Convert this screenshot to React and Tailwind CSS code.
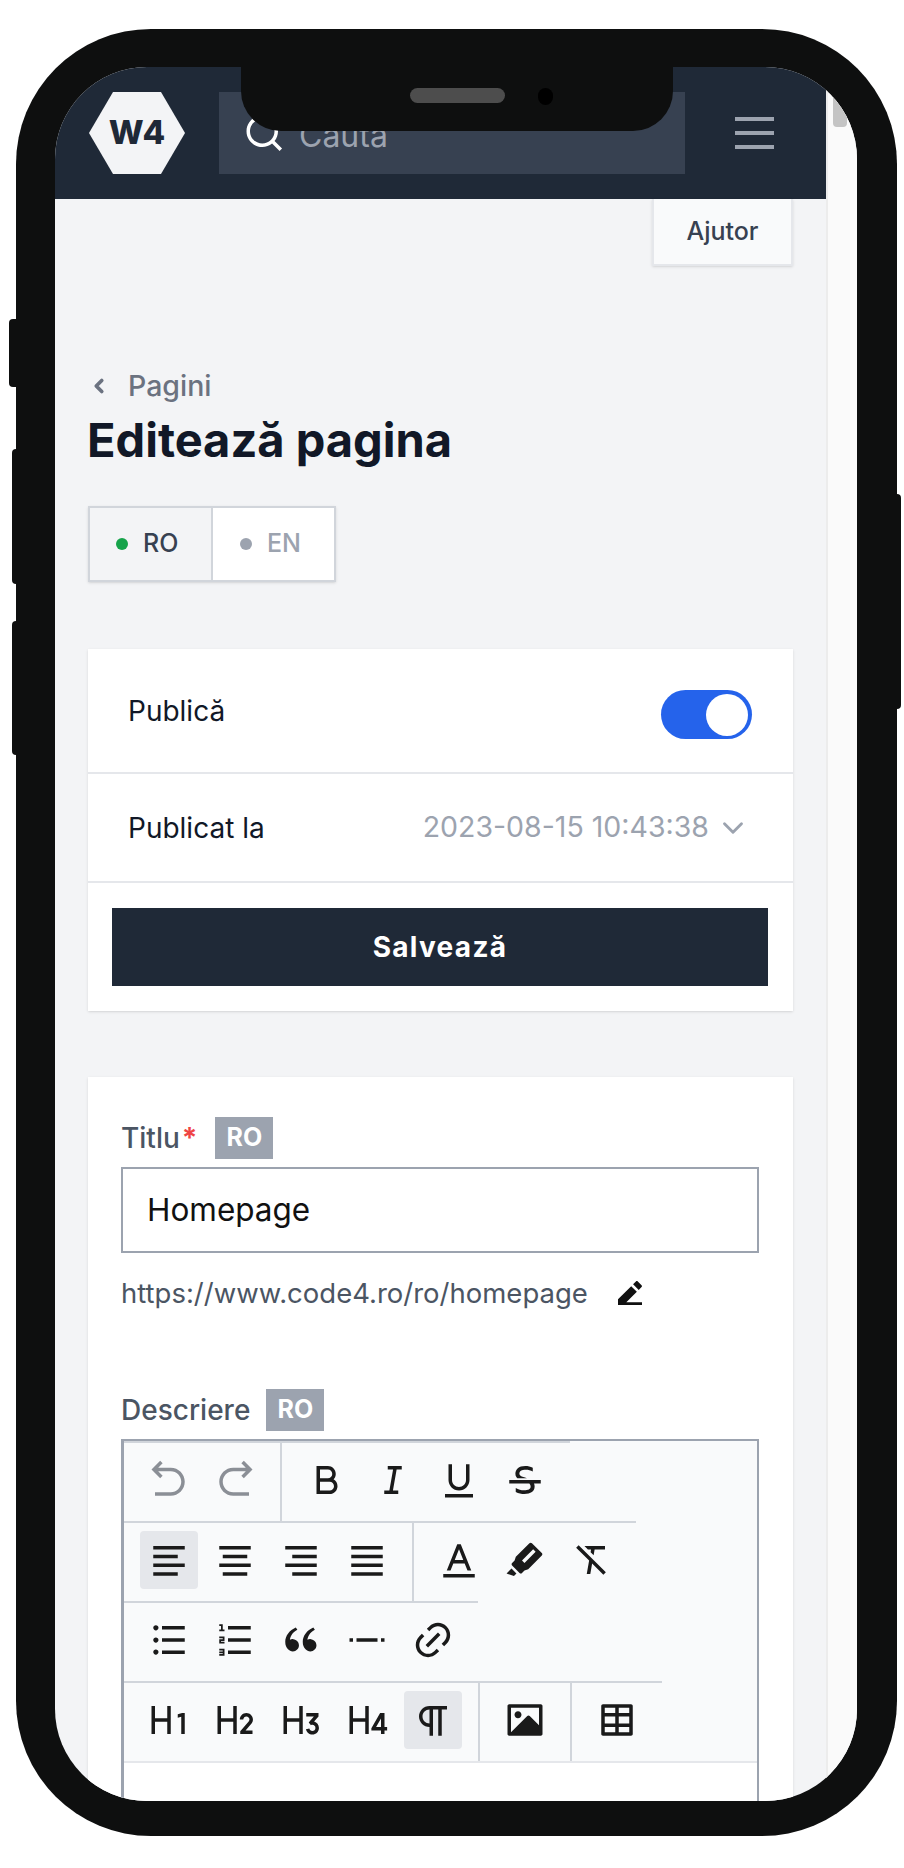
import React from "react";
import {
  RiArrowGoBackLine,
  RiArrowGoForwardLine,
  RiBold,
  RiItalic,
  RiUnderline,
  RiStrikethrough,
  RiAlignLeft,
  RiAlignCenter,
  RiAlignRight,
  RiAlignJustify,
  RiFontColor,
  RiMarkPenFill,
  RiFormatClear,
  RiListUnordered,
  RiListOrdered,
  RiDoubleQuotesL,
  RiSeparator,
  RiLink,
  RiH1,
  RiH2,
  RiH3,
  RiH4,
  RiParagraph,
  RiImageFill,
  RiTable2,
  RiEdit2Fill,
  RiSearchLine,
} from "react-icons/ri";
import { ChevronDown, ChevronLeft } from "lucide-react";

const rows = [
  [
    [{ icon: RiArrowGoBackLine, muted: true }, { icon: RiArrowGoForwardLine, muted: true }],
    [{ icon: RiBold }, { icon: RiItalic }, { icon: RiUnderline }, { icon: RiStrikethrough }],
  ],
  [
    [{ icon: RiAlignLeft, active: true }, { icon: RiAlignCenter }, { icon: RiAlignRight }, { icon: RiAlignJustify }],
    [{ icon: RiFontColor }, { icon: RiMarkPenFill }, { icon: RiFormatClear }],
  ],
  [[{ icon: RiListUnordered }, { icon: RiListOrdered }, { icon: RiDoubleQuotesL }, { icon: RiSeparator }, { icon: RiLink }]],
  [
    [{ icon: RiH1 }, { icon: RiH2 }, { icon: RiH3 }, { icon: RiH4 }, { icon: RiParagraph, active: true }],
    [{ icon: RiImageFill }],
    [{ icon: RiTable2 }],
  ],
];

const Badge = () => (
  <span className="flex h-[42px] w-[58px] items-center justify-center bg-[#9ca3af] text-[25px] font-bold text-white">RO</span>
);

const Toolbar = () => (
  <div className="flex flex-col items-start border-b-2 border-[#e5e7eb] bg-[#f9fafb]">
    {rows.map((groups, i) => (
      <div key={i} className="flex">
        {groups.map((group, j) => (
          <div
            key={j}
            className={`flex gap-2 border-t-2 border-[#d1d5db] px-4 pt-2 pb-3 ${j < groups.length - 1 ? "border-r-2" : ""}`}
          >
            {group.map(({ icon: Icon, active, muted }, k) => (
              <span
                key={k}
                className={`flex h-[58px] w-[58px] items-center justify-center rounded ${active ? "bg-[#e5e7eb]" : ""} ${muted ? "text-[#8b8f96]" : "text-[#1a1a1a]"}`}
              >
                <Icon size={42} />
              </span>
            ))}
          </div>
        ))}
      </div>
    ))}
  </div>
);

export default function App() {
  return (
    <div className="h-[1868px] w-[904px] overflow-hidden bg-white pt-[29px] pl-[16px] font-[Inter,sans-serif]">
      <div className="relative h-[1807px] w-[881px] rounded-[135px] bg-[#0e0f0f] pt-[38px] pr-[40px] pb-[35px] pl-[39px]">
        {/* side buttons */}
        <span className="absolute top-[290px] -left-[7px] h-[68px] w-[7px] rounded-l bg-[#0e0f0f]" />
        <span className="absolute top-[420px] -left-[4px] h-[135px] w-[4px] rounded-l bg-[#0e0f0f]" />
        <span className="absolute top-[592px] -left-[4px] h-[134px] w-[4px] rounded-l bg-[#0e0f0f]" />
        <span className="absolute top-[465px] -right-[4px] h-[215px] w-[4px] rounded-r bg-[#0e0f0f]" />

        {/* notch */}
        <div className="absolute top-[37px] left-[225px] z-10 flex h-[65px] w-[432px] justify-center rounded-b-[40px] bg-[#0e0f0f] pt-[22px]">
          <span className="h-[15px] w-[95px] rounded-full bg-[#4d4d4d]" />
          <span className="absolute top-[22px] left-[297px] h-[17px] w-[15px] rounded-full bg-black" />
        </div>

        <div className="flex h-full overflow-hidden rounded-[92px] bg-[#f3f4f6]">
          <div className="w-[771px] shrink-0">
            <header className="flex h-[132px] items-center bg-[#1f2937] pr-[52px] pl-[34px]">
              <div className="flex h-[82px] w-[96px] shrink-0 items-center justify-center bg-[#f3f4f6] text-[33px] font-extrabold text-[#1f2937] [clip-path:polygon(25%_0,75%_0,100%_50%,75%_100%,25%_100%,0_50%)]">
                W4
              </div>
              <div className="ml-[34px] flex h-[82px] w-[468px] items-center bg-[#374151] pl-[24px] text-white">
                <RiSearchLine size={42} />
                <span className="ml-[14px] pt-[6px] text-[32px] text-[#9ca3af]">Caută</span>
              </div>
              <div className="ml-[50px] flex w-[39px] flex-col gap-[10px]">
                <span className="h-[4px] bg-[#9ca3af]" />
                <span className="h-[4px] bg-[#9ca3af]" />
                <span className="h-[4px] bg-[#9ca3af]" />
              </div>
            </header>

            <main className="pr-[33px] pl-[33px]">
              <div className="flex justify-end">
                <div className="flex h-[67px] w-[141px] items-center justify-center border-2 border-t-0 border-[#e5e7eb] bg-[#f9fafb] text-[25px] font-medium text-[#374151] shadow-sm">
                  Ajutor
                </div>
              </div>

              <div className="mt-[105px] flex items-center text-[#6b7280]">
                <ChevronLeft size={22} strokeWidth={4} />
                <span className="ml-[18px] text-[28.5px] leading-[30px] font-medium">Pagini</span>
              </div>
              <h1 className="mt-[10px] -ml-[1px] text-[47px] leading-[58px] font-bold text-[#111827]">Editează pagina</h1>

              <div className="mt-[37px] flex h-[76px] w-[248px] border-2 border-[#d1d5db] shadow-sm">
                <div className="flex w-[123px] items-center gap-[15px] border-r-2 border-[#d1d5db] pl-[26px] text-[25px] font-medium text-[#374151]">
                  <span className="h-[12px] w-[12px] rounded-full bg-[#16a34a]" />
                  RO
                </div>
                <div className="flex flex-1 items-center gap-[15px] bg-white pl-[27px] text-[25px] font-medium text-[#9ca3af]">
                  <span className="h-[12px] w-[12px] rounded-full bg-[#9ca3af]" />
                  EN
                </div>
              </div>

              <section className="mt-[67px] h-[362px] bg-white shadow">
                <div className="flex h-[125px] items-center justify-between border-b-2 border-[#e5e7eb] pr-[41px] pl-[40px] text-[28px] text-[#111827]">
                  Publică
                  <span className="mt-[8px] flex h-[49px] w-[91px] items-center justify-end rounded-full bg-[#2563eb] pr-[4px]">
                    <span className="h-[42px] w-[42px] rounded-full bg-white" />
                  </span>
                </div>
                <div className="flex h-[109px] items-center justify-between border-b-2 border-[#e5e7eb] pr-[43px] pl-[40px] text-[28px] text-[#111827]">
                  Publicat la
                  <span className="flex items-center gap-[7px] text-[28.5px] text-[#9ca3af]">
                    2023-08-15 10:43:38
                    <ChevronDown size={34} strokeWidth={2} />
                  </span>
                </div>
                <div className="pt-[25px] pr-[25px] pl-[24px]">
                  <button className="flex h-[78px] w-full items-center justify-center bg-[#1f2937] text-[28px] font-bold tracking-[1.3px] text-white">
                    Salvează
                  </button>
                </div>
              </section>

              <section className="mt-[66px] bg-white pt-[40px] pr-[34px] pb-[200px] pl-[33px] shadow">
                <div className="flex items-center text-[28px] font-medium text-[#4b5563]">
                  Titlu<span className="ml-[2px] font-bold text-[#ef4444]">*</span>
                  <span className="ml-[18px]">
                    <Badge />
                  </span>
                </div>
                <div className="mt-[8px] flex h-[86px] items-center border-2 border-[#9ca3af] pl-[24px] text-[31.5px] text-[#111111]">
                  Homepage
                </div>
                <div className="mt-[22px] flex items-center text-[27.5px] leading-[36px] text-[#4b5563]">
                  https://www.code4.ro/ro/homepage
                  <RiEdit2Fill size={32} className="ml-[26px] text-[#111111]" />
                </div>
                <div className="mt-[78px] flex items-center text-[28px] font-medium text-[#4b5563]">
                  Descriere
                  <span className="ml-[16px]">
                    <Badge />
                  </span>
                </div>
                <div className="mt-[8px] h-[500px] border-2 border-l-[3px] border-[#9ca3af]">
                  <Toolbar />
                </div>
              </section>
            </main>
          </div>

          {/* scrollbar gutter */}
          <div className="flex-1 border-l-2 border-[#ececec] bg-[#fafafa] pl-[5px]">
            <div className="h-[60px] w-[14px] rounded-b-[4px] bg-[#c4c4c4]" />
          </div>
        </div>
      </div>
    </div>
  );
}
